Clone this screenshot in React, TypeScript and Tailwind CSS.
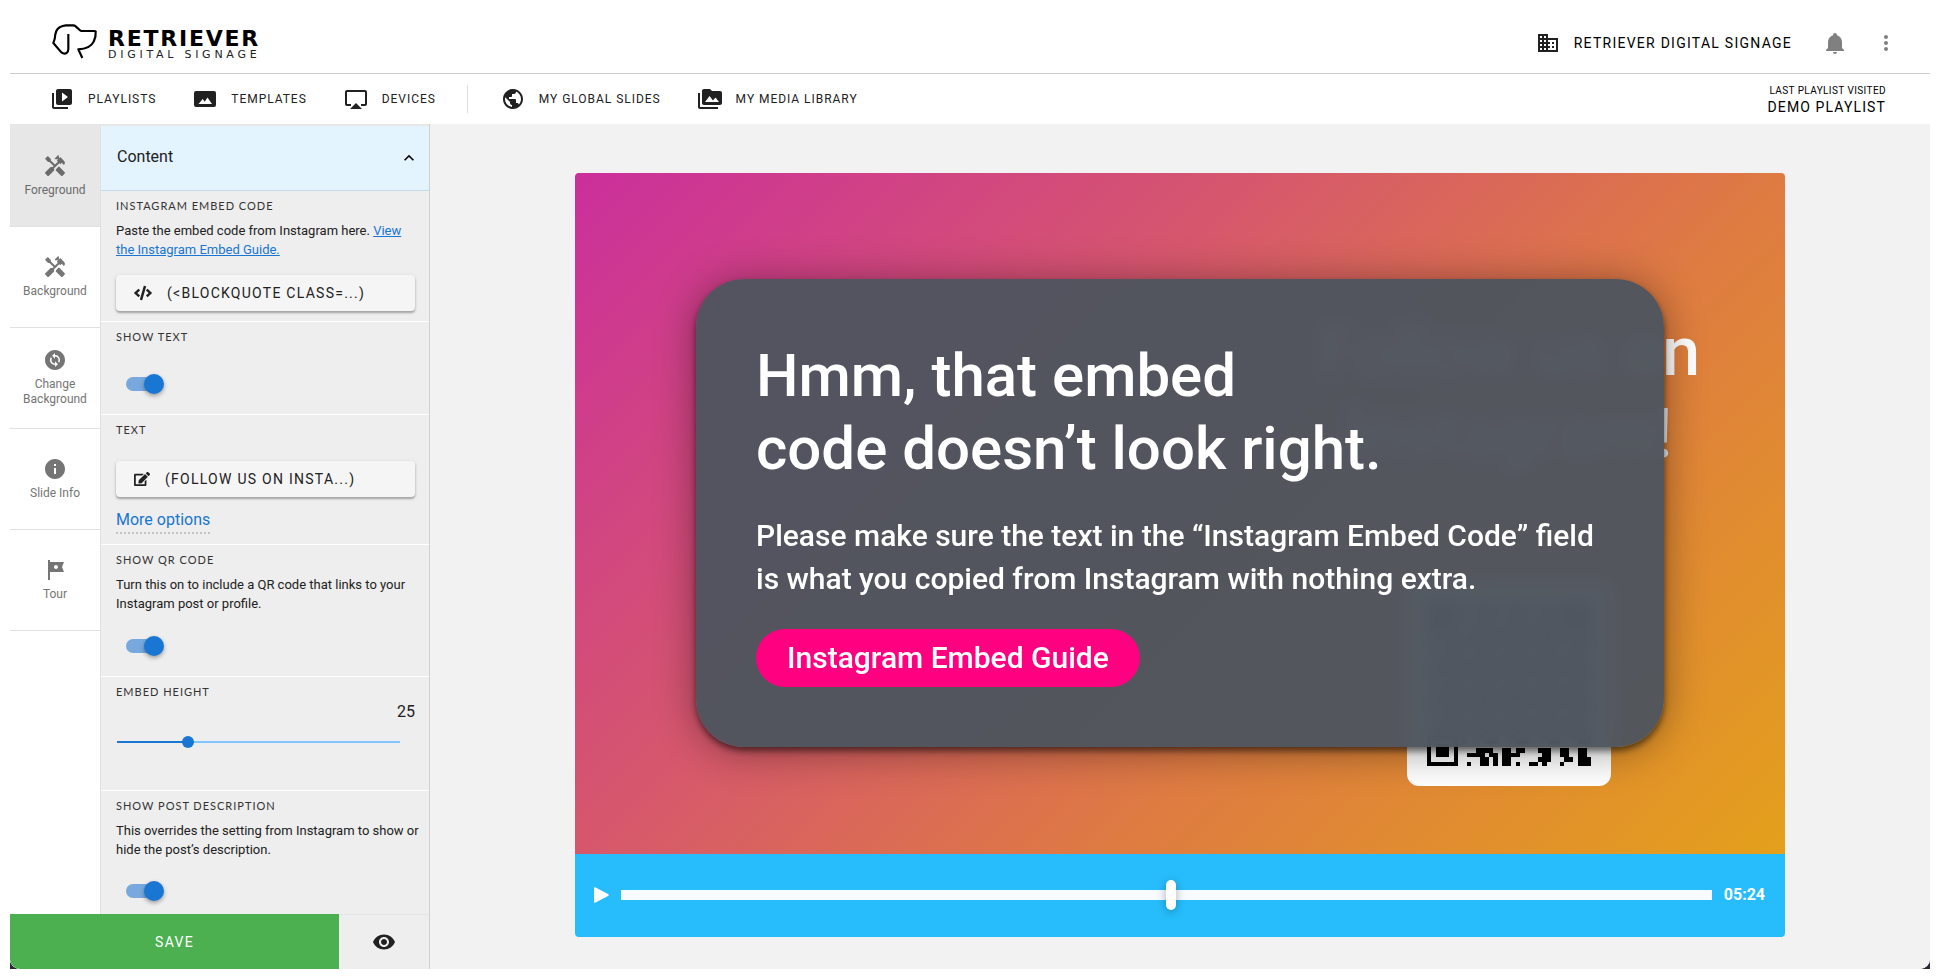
import React, { useState } from "react";
import { FaCode, FaEdit } from "react-icons/fa";
import {
  MdAirplay,
  MdBusiness,
  MdChangeCircle,
  MdExpandLess,
  MdHandyman,
  MdInfo,
  MdMoreVert,
  MdPermMedia,
  MdPublic,
  MdTour,
  MdVideoLibrary,
  MdVisibility,
} from "react-icons/md";

function LogoMark() {
  return (
    <svg viewBox="34 24 138 108" className="h-9 w-[46px]" fill="none" stroke="#000" strokeWidth="6.5" strokeLinejoin="round">
      <path d="M125 129L113 103C136 102 152 95 159 80C164 70 166 60 165 50Q165 48 162 48L123 48Q120 48 117 45L105 34Q102 31 97 31L76 31Q54 33 47 48Q43 58 42 72L38 84L62 112Q70 118 78 114Q83 110 83 102L83 57" />
    </svg>
  );
}

function TemplateIcon() {
  return (
    <svg viewBox="0 0 24 24" className="size-6" fill="currentColor">
      <path
        fillRule="evenodd"
        d="M3 4h18a2 2 0 0 1 2 2v12a2 2 0 0 1-2 2H3a2 2 0 0 1-2-2V6a2 2 0 0 1 2-2zM5.500 17H19l-4.500-6.500-2.800 4.200-2-2.700z"
      />
    </svg>
  );
}

function BellIcon() {
  return (
    <svg viewBox="0 0 24 24" className="size-6" fill="currentColor">
      <path d="M21,19V20H3V19L5,17V11C5,7.9 7.03,5.17 10,4.29C10,4.19 10,4.1 10,4A2,2 0 0,1 12,2A2,2 0 0,1 14,4C14,4.1 14,4.19 14,4.29C16.97,5.17 19,7.9 19,11V17L21,19M14,21A2,2 0 0,1 12,23A2,2 0 0,1 10,21" />
    </svg>
  );
}

const QR_SIZE = 37;

// last four rows of the code
const QR_TAIL = [
  "#.###.#....####..##.##...###..##..##.",
  "#.###.#..####.##.####.....##..##..##.",
  "#.....#.....##.#.##......###...##.###",
  "#######..#..##.#.##.#..##.#...#...###",
];

function isFinder(x: number, y: number) {
  const ring = Math.max(Math.abs(x - 3), Math.abs(y - 3));
  return ring === 3 || ring < 2;
}

function isDark(x: number, y: number) {
  if (y >= QR_SIZE - 4) return QR_TAIL[y - QR_SIZE + 4][x] === "#";
  if (x < 8 && y < 8) return x < 7 && y < 7 && isFinder(x, y);
  if (x > 28 && y < 8) return x > 29 && y < 7 && isFinder(x - 30, y);
  if (x < 8 && y > 28) return x < 7 && y > 29 && isFinder(x, y - 30);
  return (x * y + x * 3 + y * 5) % 7 < 3;
}

function QrCode() {
  const cells = [];
  for (let y = 0; y < QR_SIZE; y++) {
    for (let x = 0; x < QR_SIZE; x++) {
      if (isDark(x, y)) cells.push(`M${x} ${y}h1v1h-1z`);
    }
  }
  return (
    <svg viewBox="0 0 37 37" className="size-[164px]" shapeRendering="crispEdges">
      <path d={cells.join("")} />
    </svg>
  );
}

function NavLink({ icon, children }: { icon: React.ReactNode; children: React.ReactNode }) {
  return (
    <a href="#" className="flex items-center gap-3.5 text-xs tracking-[0.08em] text-[#212121] uppercase">
      {icon}
      <span>{children}</span>
    </a>
  );
}

function SideTab({ icon, label, active }: { icon: React.ReactNode; label: string; active?: boolean }) {
  return (
    <button
      className={`flex h-[101px] w-full flex-col items-center justify-center gap-[5px] border-b border-[#e0e0e0] px-2 pb-px text-xs leading-[15px] ${
        active ? "bg-[#e7e7e7] text-[#6b6b6b]" : "bg-white text-[#757575]"
      }`}
    >
      {icon}
      <span>{label}</span>
    </button>
  );
}

function Field({ label, className, children }: { label: string; className: string; children: React.ReactNode }) {
  return (
    <div className={`border-t border-white pt-[7px] pr-3.5 pl-[15px] ${className}`}>
      <h3 className="font-[Lato,sans-serif] text-[11px] leading-4 tracking-[0.09em] text-[#333] uppercase">{label}</h3>
      {children}
    </div>
  );
}

function Hint({ children }: { children: React.ReactNode }) {
  return <p className="mt-[7px] -mr-1.5 text-[13px] leading-[19px]">{children}</p>;
}

function Toggle({ label, className }: { label: string; className: string }) {
  const [on, setOn] = useState(true);
  return (
    <label className={`relative ml-2.5 flex h-5 w-[38px] items-center ${className}`}>
      <input
        type="checkbox"
        aria-label={label}
        className="peer sr-only"
        checked={on}
        onChange={(e) => setOn(e.target.checked)}
      />
      <span className="h-3.5 w-9 rounded-full bg-gray-400 peer-checked:bg-[#78a9de]" />
      <span className="absolute left-0 size-5 rounded-full bg-white shadow-[0_2px_4px_rgba(0,0,0,0.35)] peer-checked:left-[18px] peer-checked:bg-[#1976d2]" />
    </label>
  );
}

function EditButton({ icon, className, children }: { icon: React.ReactNode; className: string; children: React.ReactNode }) {
  return (
    <button
      className={`flex h-9 w-full items-center gap-[15px] rounded bg-[#f5f5f5] px-[18px] text-sm tracking-[0.09em] text-[#212121] uppercase shadow-[0_2px_2px_rgba(0,0,0,0.25),0_1px_4px_rgba(0,0,0,0.12)] ${className}`}
    >
      {icon}
      <span>{children}</span>
    </button>
  );
}

function HeightSlider() {
  const [value, setValue] = useState(25);
  return (
    <>
      <output className="block text-right text-base leading-6">{value}</output>
      <div className="mt-3 mr-[15px] ml-px grid items-center">
        <div className="col-start-1 row-start-1 h-0.5 bg-[#82c4ff]">
          <div className="h-full bg-[#1976d2]" style={{ width: `${value}%` }} />
        </div>
        <input
          type="range"
          aria-label="Embed height"
          value={value}
          onChange={(e) => setValue(Number(e.target.value))}
          className="z-10 col-start-1 row-start-1 -mx-1.5 h-3 appearance-none bg-transparent [&::-webkit-slider-thumb]:size-3 [&::-webkit-slider-thumb]:appearance-none [&::-webkit-slider-thumb]:rounded-full [&::-webkit-slider-thumb]:bg-[#1976d2]"
        />
      </div>
    </>
  );
}

function Header() {
  return (
    <header className="flex h-[74px] items-center justify-between border-b border-[#ccc] pr-8 pl-[42px]">
      <a href="#" className="mt-2 flex items-center gap-2.5 text-black">
        <LogoMark />
        <span className="flex flex-col pt-2 font-['DejaVu_Sans',sans-serif]">
          <span className="text-[22px] leading-5 font-bold tracking-[0.08em]">RETRIEVER</span>
          <span className="text-[11px] leading-3 tracking-[0.34em] text-[#222]">DIGITAL SIGNAGE</span>
        </span>
      </a>
      <div className="mt-3 flex items-center text-[#808080]">
        <a href="#" className="flex items-center gap-3.5 text-sm tracking-[0.09em] text-black uppercase">
          <MdBusiness className="size-6 text-[#212121]" />
          <span>Retriever Digital Signage</span>
        </a>
        <button aria-label="Notifications" className="ml-[31px]">
          <BellIcon />
        </button>
        <button aria-label="More" className="ml-[27px]">
          <MdMoreVert className="size-6" />
        </button>
      </div>
    </header>
  );
}

function NavBar() {
  return (
    <nav className="flex h-[50px] items-center justify-between bg-white pr-[44px] pl-10">
      <div className="flex items-center gap-[37px]">
        <NavLink icon={<MdVideoLibrary className="size-6" />}>Playlists</NavLink>
        <NavLink icon={<TemplateIcon />}>Templates</NavLink>
        <NavLink icon={<MdAirplay className="size-6" />}>Devices</NavLink>
        <span className="-mr-1 -ml-1.5 h-7 w-px bg-[#ddd]" />
        <NavLink icon={<MdPublic className="size-6" />}>My Global Slides</NavLink>
        <NavLink icon={<MdPermMedia className="size-6" />}>My Media Library</NavLink>
      </div>
      <a href="#" className="flex flex-col items-end pt-1 text-black uppercase">
        <span className="text-[10px] leading-3 tracking-[0.04em]">Last playlist visited</span>
        <span className="text-sm leading-5 tracking-[0.08em]">Demo Playlist</span>
      </a>
    </nav>
  );
}

function Sidebar() {
  return (
    <aside className="flex w-[420px] shrink-0 flex-col border-r border-[#d0d0d0] bg-white">
      <div className="flex min-h-0 flex-1 border-t-2 border-[#e7e7e7]">
        <div className="w-[91px] shrink-0 border-r border-[#e0e0e0]">
          <SideTab active icon={<MdHandyman className="size-6" />} label="Foreground" />
          <SideTab icon={<MdHandyman className="size-6" />} label="Background" />
          <SideTab icon={<MdChangeCircle className="size-6" />} label="Change Background" />
          <SideTab icon={<MdInfo className="size-6" />} label="Slide Info" />
          <SideTab icon={<MdTour className="size-6" />} label="Tour" />
        </div>
        <div className="min-w-0 flex-1 overflow-hidden bg-[#eee] text-[#212121]">
          <button className="flex h-16 w-full items-center justify-between bg-[#e3f4ff] pr-2.5 pl-4 text-base">
            <span className="pb-0.5">Content</span>
            <MdExpandLess className="size-5 text-black" stroke="currentColor" />
          </button>
          <Field label="Instagram embed code" className="border-t-[#c4d9ea]! pb-2.5">
            <Hint>
              Paste the embed code from Instagram here.{" "}
              <a href="#" className="text-[#1976d2] underline">
                View the Instagram Embed Guide.
              </a>
            </Hint>
            <EditButton className="mt-4" icon={<FaCode className="size-[18px]" />}>
              {"(<blockquote class=...)"}
            </EditButton>
          </Field>
          <Field label="Show text" className="pb-5">
            <Toggle label="Show text" className="mt-[29px]" />
          </Field>
          <Field label="Text" className="pb-2.5">
            <EditButton className="mt-[23px]" icon={<FaEdit className="size-4" />}>
              (Follow us on Insta...)
            </EditButton>
            <a href="#" className="mt-[11px] block w-fit border-b-2 border-dotted border-[#c4c4c4] text-base leading-6 text-[#1976d2]">
              More options
            </a>
          </Field>
          <Field label="Show QR code" className="pb-5">
            <Hint>Turn this on to include a QR code that links to your Instagram post or profile.</Hint>
            <Toggle label="Show QR code" className="mt-[23px]" />
          </Field>
          <Field label="Embed height" className="pb-[42px]">
            <HeightSlider />
          </Field>
          <Field label="Show post description" className="pb-5">
            <Hint>This overrides the setting from Instagram to show or hide the post’s description.</Hint>
            <Toggle label="Show post description" className="mt-[22px]" />
          </Field>
        </div>
      </div>
      <div className="flex h-[55px] shrink-0">
        <button className="flex-1 bg-[#4caf50] text-sm tracking-[0.09em] text-white uppercase">Save</button>
        <button aria-label="Preview" className="flex w-[90px] items-center justify-center border-t border-[#e4e4e4] bg-[#eee]">
          <MdVisibility className="size-6 text-[#212121]" />
        </button>
      </div>
    </aside>
  );
}

function Slide() {
  return (
    <div className="relative aspect-video overflow-hidden rounded-t bg-[linear-gradient(135deg,#cb2f9b_0%,#d6576d_36%,#de7b42_64%,#e4a01b_100%)]">
      <div className="mr-[84px] ml-auto flex w-[384px] flex-col items-center pt-[138px] text-center text-white">
        <p className="text-[68px] leading-[82px] font-medium whitespace-nowrap">
          Follow us on
          <br />
          Instagram!
        </p>
        <div className="mt-[107px] rounded-xl bg-white p-5">
          <QrCode />
        </div>
      </div>

      {/* Embed error */}
      <div className="absolute inset-0 flex items-center justify-center">
        <div className="flex h-[468px] w-4/5 flex-col items-start justify-center rounded-[48px] bg-[#4e555e]/97 px-[60px] text-white shadow-[0_4px_6px_rgba(0,0,0,0.5),0_4px_40px_rgba(0,0,0,0.4)] backdrop-blur-sm">
          <h1 className="text-[60px] leading-[73px] font-medium">
            Hmm, that embed
            <br />
            code doesn’t look right.
          </h1>
          <p className="mt-[29px] text-[30px] leading-[43px] font-medium">
            Please make sure the text in the “Instagram Embed Code” field
            <br />
            is what you copied from Instagram with nothing extra.
          </p>
          <a href="#" className="mt-[29px] rounded-full bg-[#ff0080] px-[31px] text-[30px] leading-[58px] font-medium">
            Instagram Embed Guide
          </a>
        </div>
      </div>
    </div>
  );
}

function Timeline() {
  return (
    <div className="flex h-[83px] items-center rounded-b bg-[#27bdfc] pr-5 pl-[19px] text-white">
      <button aria-label="Play">
        <svg viewBox="0 0 15 16" className="h-4 w-[15px]" fill="currentColor">
          <path d="M0 1.500Q0-.3 1.600.6L14 7Q15.500 8 14 9L1.600 15.400Q0 16.300 0 14.500z" />
        </svg>
      </button>
      <input
        type="range"
        aria-label="Playback position"
        defaultValue={50.4}
        step={0.1}
        className="ml-3 h-2.5 min-w-0 flex-1 appearance-none bg-[#f7fbff] [&::-webkit-slider-thumb]:h-[30px] [&::-webkit-slider-thumb]:w-2.5 [&::-webkit-slider-thumb]:appearance-none [&::-webkit-slider-thumb]:rounded-[5px] [&::-webkit-slider-thumb]:bg-white [&::-webkit-slider-thumb]:shadow-[0_2px_10px_rgba(0,0,0,0.3)]"
      />
      <span className="ml-3 text-base font-bold">05:24</span>
    </div>
  );
}

export default function App() {
  return (
    <div className="h-screen bg-white px-2.5 pb-2.5 font-[Roboto,sans-serif]">
      <div className="h-full bg-[#2a2730]">
        <div className="flex h-full flex-col overflow-hidden rounded-b-[10px] bg-white">
          <Header />
          <NavBar />
          <div className="flex min-h-0 flex-1 bg-[#f2f2f2]">
            <Sidebar />
            <main className="min-w-0 flex-1 px-[145px] pt-[49px]">
              <Slide />
              <Timeline />
            </main>
          </div>
        </div>
      </div>
    </div>
  );
}
